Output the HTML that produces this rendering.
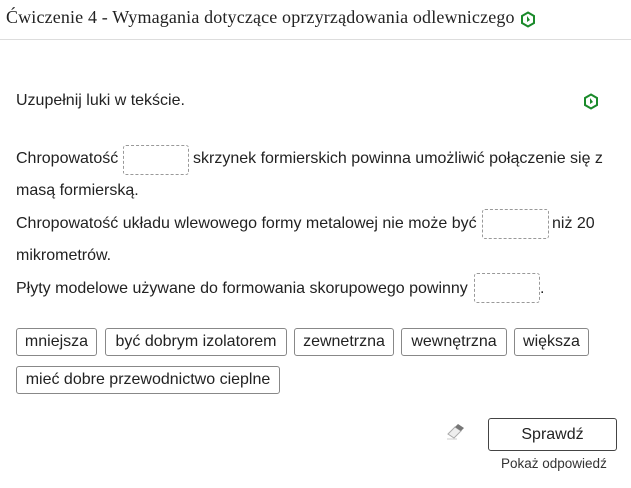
<!DOCTYPE html>
<html><head><meta charset="utf-8"><style>
body{margin:0;width:631px;height:488px;background:#fff;font-family:"Liberation Sans",sans-serif;color:#222;position:relative;overflow:hidden}
.a{position:absolute;white-space:nowrap}
.t{font-size:16px}
.gap{position:absolute;border:1px dashed #999;border-radius:3px;height:28px;box-sizing:border-box}
.chip{position:absolute;white-space:nowrap;text-align:center;border:1px solid #888;border-radius:3px;height:28px;font-size:16px;line-height:26px;padding:0;box-sizing:border-box;color:#222}
</style></head><body>
<div class="a" style="left:6px;top:7px;font-family:'Liberation Serif',serif;font-size:18px;letter-spacing:0.15px;color:#222">Ćwiczenie 4 - Wymagania dotyczące oprzyrządowania odlewniczego</div>
<svg class="a" style="left:520px;top:11px" width="16" height="17" viewBox="0 0 16 17"><path d="M8 1.5 L14 5 L14 12 L8 15.5 L2 12 L2 5Z" fill="none" stroke="#1a8a2a" stroke-width="2"/><path d="M7 5v6l3-2z" fill="#1a8a2a"/></svg>
<div class="a" style="left:0;top:39px;width:631px;height:1px;background:#ddd"></div>
<div class="a t" style="left:16px;top:92px">Uzupełnij luki w tekście.</div>
<svg class="a" style="left:583px;top:93px" width="16" height="17" viewBox="0 0 16 17"><path d="M8 1.5 L14 5 L14 12 L8 15.5 L2 12 L2 5Z" fill="none" stroke="#1a8a2a" stroke-width="2"/><path d="M7 5v6l3-2z" fill="#1a8a2a"/></svg>
<div class="a t" style="left:16px;top:150px">Chropowatość</div>
<div class="gap" style="left:123px;top:145px;width:66px;height:30px"></div>
<div class="a t" style="left:193px;top:150px">skrzynek formierskich powinna umożliwić połączenie się z</div>
<div class="a t" style="left:16px;top:182px">masą formierską.</div>
<div class="a t" style="left:16px;top:215px">Chropowatość układu wlewowego formy metalowej nie może być</div>
<div class="gap" style="left:482px;top:209px;width:67px;height:30px"></div>
<div class="a t" style="left:552px;top:215px">niż 20</div>
<div class="a t" style="left:16px;top:247px">mikrometrów.</div>
<div class="a t" style="left:16px;top:280px">Płyty modelowe używane do formowania skorupowego powinny</div>
<div class="gap" style="left:474px;top:273px;width:66px;height:30px"></div>
<div class="a t" style="left:540px;top:280px">.</div>
<div class="chip" style="left:16px;top:328px;width:81px">mniejsza</div>
<div class="chip" style="left:105px;top:328px;width:182px">być dobrym izolatorem</div>
<div class="chip" style="left:294px;top:328px;width:100px">zewnetrzna</div>
<div class="chip" style="left:401px;top:328px;width:106px">wewnętrzna</div>
<div class="chip" style="left:514px;top:328px;width:75px">większa</div>
<div class="chip" style="left:16px;top:366px;width:264px">mieć dobre przewodnictwo cieplne</div>
<svg class="a" style="left:445px;top:424px" width="20" height="16" viewBox="0 0 20 16"><path d="M3 10 L10 3 L16 7 L9 14Z" fill="#eee" stroke="#aaa"/><path d="M10 3 L16 7 L19 4 L13 0Z" fill="#777"/><path d="M2 15h10" stroke="#ccc"/></svg>
<div class="a" style="left:488px;top:418px;width:129px;height:33px;border:1px solid #444;border-radius:3px;box-sizing:border-box;text-align:center;line-height:31px;font-size:16px;color:#222">Sprawdź</div>
<div class="a" style="left:501px;top:456px;font-size:13.5px;color:#333">Pokaż odpowiedź</div>
</body></html>
